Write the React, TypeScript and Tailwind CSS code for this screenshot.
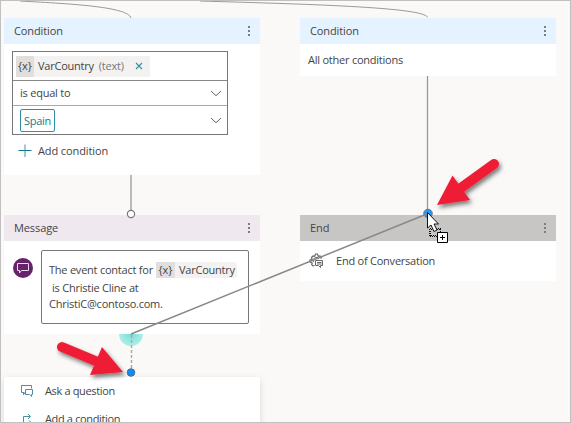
import React from "react";

function Dots() {
  return (
    <span className="flex flex-col gap-[2px] pr-[10px]">
      <i className="h-[2px] w-[2px] bg-[#7c7c80]" />
      <i className="h-[2px] w-[2px] bg-[#7c7c80]" />
      <i className="h-[2px] w-[2px] bg-[#7c7c80]" />
    </span>
  );
}

function Header({ title, tone }: { title: string; tone: string }) {
  return (
    <header className={"flex h-[26px] shrink-0 items-center justify-between pl-[10px] " + tone}>
      <span className="tracking-[-0.1px]">{title}</span>
      <Dots />
    </header>
  );
}

function Chevron() {
  return (
    <svg width="12" height="7" viewBox="0 0 12 7" fill="none" stroke="#666" strokeWidth="1">
      <path d="M1 1l5 4.7L11 1" />
    </svg>
  );
}

function Arrow({ head, from, to }: { head: string; from: [number, number]; to: [number, number] }) {
  return (
    <g filter="url(#arrowShadow)" fill="#ee1c36" stroke="#ee1c36">
      <line x1={from[0]} y1={from[1]} x2={to[0]} y2={to[1]} strokeWidth="10" strokeLinecap="round" />
      <path d={head} stroke="none" />
    </g>
  );
}

export default function App() {
  return (
    <main className="relative h-[423px] w-[571px] overflow-hidden border border-[#c0c0c0] bg-[#faf9f8] font-['Open_Sans','Noto_Sans',sans-serif] text-[11px] leading-[16px] tracking-[-0.23px] text-[#444]">
      <section className="absolute top-[17px] left-[3px] flex h-[157px] w-[256px] flex-col bg-white">
        <Header title="Condition" tone="bg-[#e5f2ff]" />
        <div className="mt-[7px] ml-[8px] flex h-[84px] w-[216px] flex-col border border-[#777]">
          <div className="flex h-[29px] items-center border-b border-[#888] pl-[3px]">
            <span className="flex h-[21px] w-[134px] items-center rounded-[2px] bg-[#f3f2f1]">
              <b className="flex h-[21px] w-[18px] items-center justify-center bg-[#e1dfdd] font-normal tracking-normal">{"{x}"}</b>
              <span className="ml-[4px] whitespace-nowrap">VarCountry</span>
              <span className="ml-[5px] text-[#777]">(text)</span>
              <svg className="ml-auto mr-[7px]" width="8" height="8" viewBox="0 0 8 8" stroke="#328da5" strokeWidth="1.1">
                <path d="M1 1l6 6M7 1l-6 6" />
              </svg>
            </span>
          </div>
          <div className="flex h-[25px] items-center justify-between border-b border-[#aaa] pr-[5px] pl-[7px]">
            <span>is equal to</span>
            <Chevron />
          </div>
          <div className="flex h-[28px] items-center justify-between pr-[5px] pl-[7px]">
            <span className="flex h-[23px] w-[35px] items-center justify-center rounded-[2px] border border-[#328da5] pt-px text-[#17788d]">Spain</span>
            <Chevron />
          </div>
        </div>
        <div className="mt-[8px] flex items-center pl-[14px]">
          <svg width="14" height="14" viewBox="0 0 14 14" stroke="#17788d">
            <path d="M0.5 6.5h13" />
            <path d="M7 0.500v12.500" strokeOpacity=".8" />
          </svg>
          <span className="ml-[6px] tracking-[-0.1px]">Add condition</span>
        </div>
      </section>

      <section className="absolute top-[17px] left-[299px] flex h-[58px] w-[256px] flex-col bg-white">
        <Header title="Condition" tone="bg-[#e5f2ff]" />
        <p className="mt-[8px] pl-[8px]">All other conditions</p>
      </section>

      <section className="absolute top-[214px] left-[3px] flex h-[119px] w-[256px] flex-col rounded-[2px] bg-white">
        <Header title="Message" tone="bg-[#f0e8ef]" />
        <div className="mt-[9px] flex pl-[9px]">
          <span className="mt-[8px] flex h-[20px] w-[20px] items-center justify-center rounded-full bg-[#68216d]">
            <svg width="12" height="11" viewBox="0 0 12 11" fill="none" stroke="#eadcec">
              <path d="M.5 .5h11v7h-7L2.5 10V7.500h-2z" />
            </svg>
          </span>
          <div className="ml-[8px] flex h-[74px] w-[208px] flex-col rounded-[2px] border border-[#777] pt-[10px] pl-[7px]">
            <div className="flex h-[17px] items-center whitespace-nowrap">
              <span className="w-[107px] pt-[1px]">The event contact for</span>
              <span className="flex h-[16px] w-[81px] items-center rounded-[2px] bg-[#f3f2f1]">
                <b className="flex h-[16px] w-[19px] items-center justify-center bg-[#e1dfdd] font-normal tracking-normal">{"{x}"}</b>
                <span className="ml-[4px]">VarCountry</span>
              </span>
            </div>
            <span className="pt-[2px] pl-[3px]">is Christie Cline at</span>
            <span>ChristiC@contoso.com.</span>
          </div>
        </div>
      </section>

      <section className="absolute top-[214px] left-[299px] flex h-[66px] w-[256px] flex-col bg-white">
        <Header title="End" tone="bg-[#c8c6c4]" />
        <div className="flex h-[40px] items-center pl-[9px]">
          <svg width="16" height="16" viewBox="0 0 16 16" fill="none" stroke="#666">
            <path d="M5.500 12.500l-1.500.4-1.300-1.300.5-1.500L1 9V7l2-.8L2.500 4.500 4 3l1.700.4L6.500 1h2l.8 2.300L11 3l1.300 1.300-.5 1.500" strokeWidth="1.200" />
            <path d="M4.500 9A3 3 0 0 1 10 6" />
            <path d="M6.500 7.500h7v5h-2v2l-2-2h-3zM8 9.500h4.500M8 11h4.500" />
          </svg>
          <span className="ml-[11px]">End of Conversation</span>
        </div>
      </section>

      <section className="absolute top-[376px] left-[3px] flex h-[60px] w-[256px] flex-col rounded-[2px] bg-white pt-[6px] shadow-[0_2px_7px_rgba(0,0,0,0.13)]">
        <div className="flex h-[16px] items-center pl-[17px]">
          <svg width="12" height="12" viewBox="0 0 12 12" fill="none" stroke="#4a91a5">
            <path d="M3.500 7.500h-3v-7h10v3M2.500 7.500v2.200l2-2M4.500 4.500h7v5h-1v2l-2-2h-4z" />
          </svg>
          <span className="ml-[12px] tracking-[-0.35px]">Ask a question</span>
        </div>
        <div className="mt-[12px] flex h-[16px] items-center pl-[17px]">
          <svg width="12" height="12" viewBox="0 0 12 12" fill="none" stroke="#4a91a5">
            <path d="M0 9.500h2.500v-6H9M7 1l2.500 2.500L7 6M2.500 9.500H10M8 7.500l2 2-2 2" />
          </svg>
          <span className="ml-[12px] tracking-[-0.35px]">Add a condition</span>
        </div>
      </section>

      <svg className="absolute -top-px -left-px" width="571" height="423" viewBox="0 0 571 423" fill="none">
        <defs>
          <filter id="arrowShadow" x="-20%" y="-20%" width="150%" height="160%">
            <feDropShadow dx="2" dy="3" stdDeviation="2" floodColor="#000" floodOpacity=".5" />
          </filter>
          <radialGradient id="port" cx="131" cy="334" r="12" gradientUnits="userSpaceOnUse">
            <stop stopColor="#78ded6" />
            <stop offset="1" stopColor="#aeeee8" />
          </radialGradient>
        </defs>
        <g stroke="#999" strokeWidth="1">
          <path d="M20 1C75 4 128 7 131 18" />
          <path d="M200 1C300 4 426 7 427.500 17.500" />
          <path d="M131 175v36M427.500 76v136" strokeWidth="1.300" />
        </g>
        <circle cx="131" cy="214" r="3.600" fill="white" stroke="#777" strokeWidth="1.200" />
        <path d="M119 334h24a12 12 0 0 1-24 0z" fill="url(#port)" />
        <path d="M131.500 335v34" stroke="#aaa" strokeWidth="1.500" strokeDasharray="3 2" />
        <circle cx="131" cy="372.500" r="3.800" fill="#0e8bfa" stroke="#57687a" />
        <circle cx="428" cy="213.500" r="4.300" fill="#2694f5" stroke="#66788a" />
        <path d="M131 334L428 213.500" stroke="#888" strokeWidth="1.500" />
        <Arrow head="M437 205L452.500 175.500 470 200z" from={[494, 164]} to={[458, 190]} />
        <Arrow head="M123 372L102 347 90 375z" from={[62, 347]} to={[98, 362]} />
        <path d="M430 228.500h11M430 236.500h11M429.500 229v8M440.500 229v8" stroke="#111" strokeDasharray="1 1" />
        <path d="M430 229.500h11M430 235.500h11M430.500 230v6" stroke="#111" strokeDasharray="1 1" strokeDashoffset="1" />
        <path d="M427.500 212.500v15.500l3.500-3 3 6.500 3-1.500-3-6h4.500z" fill="white" stroke="#111" />
        <path d="M437.500 232.500h10v10h-10z" fill="white" stroke="#000" />
        <path d="M440 237.500h5M442.500 235v5" stroke="#000" />
      </svg>
    </main>
  );
}
